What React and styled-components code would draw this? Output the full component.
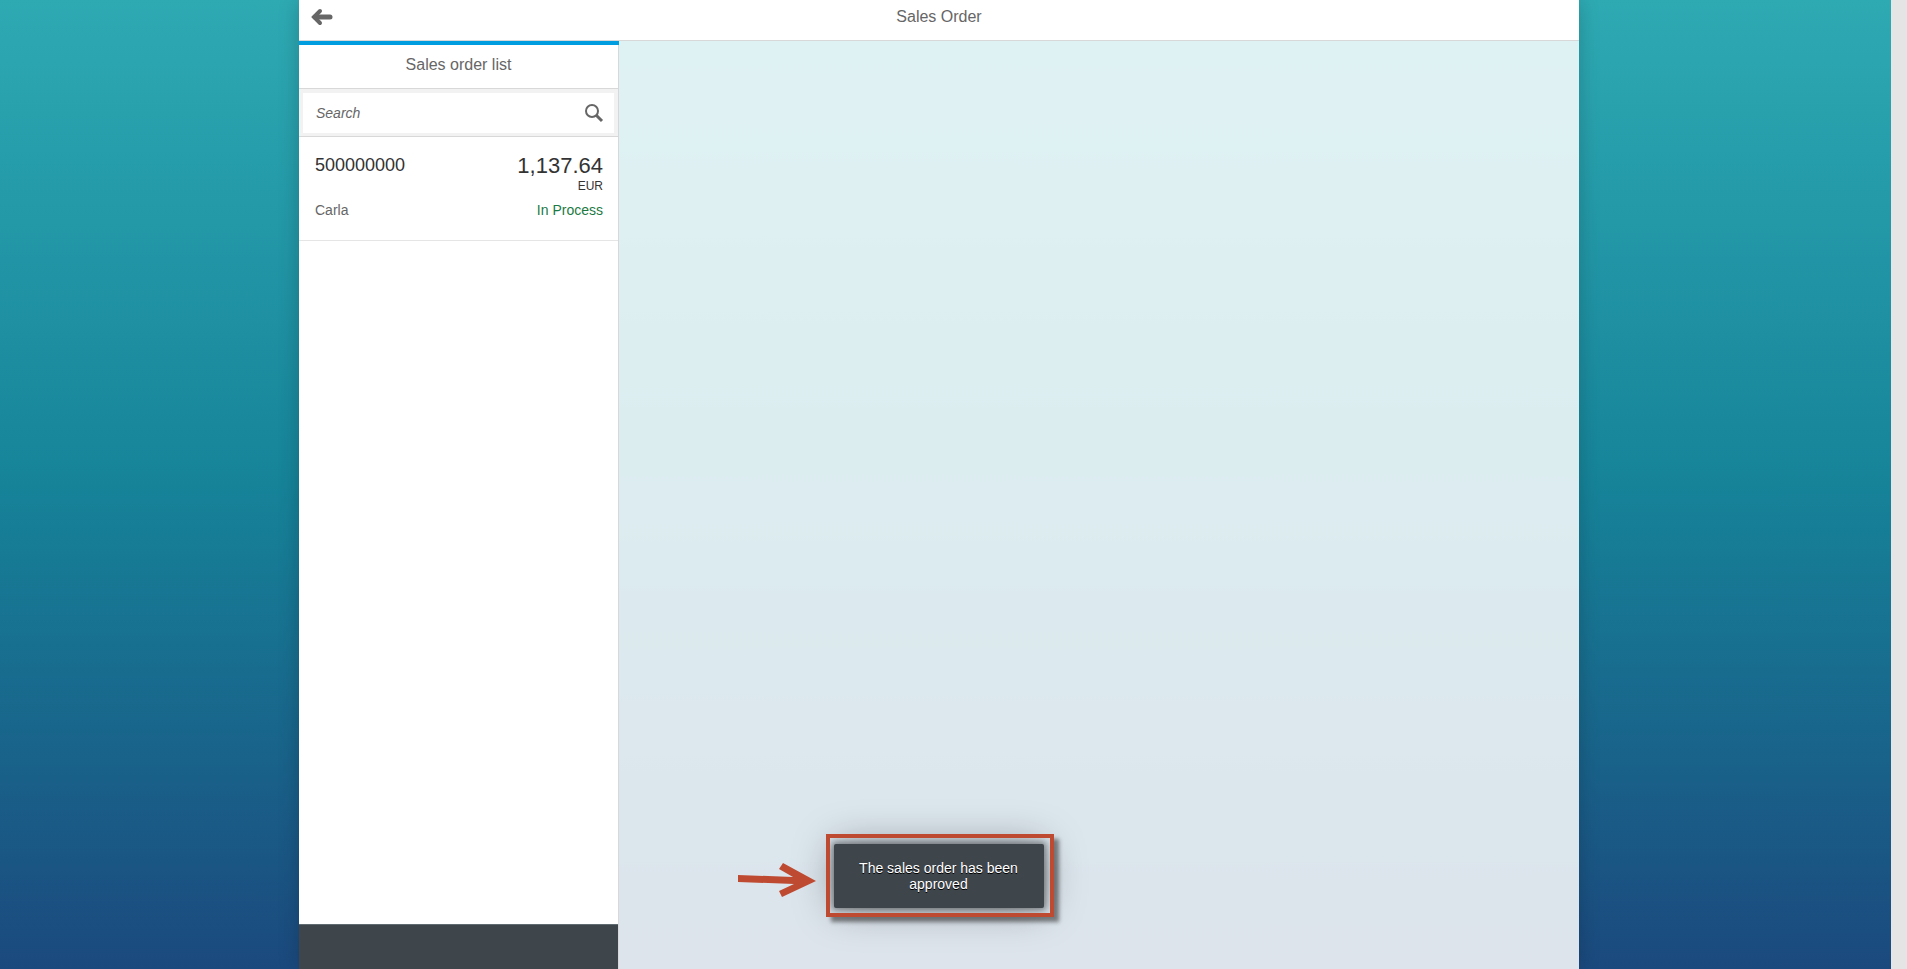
import React from "react";
import styled, { createGlobalStyle } from "styled-components";

const Global = createGlobalStyle`
  * { box-sizing: border-box; }
  body { margin: 0; font-family: "Liberation Sans", Arial, sans-serif; color: #333; }
`;
const Page = styled.div`
  display: flex;
  height: 100vh;
  overflow: hidden;
  background: #e5e5e5;
  padding-right: 16px;
`;
const Backdrop = styled.div`
  position: relative;
  flex: 1;
  display: flex;
  justify-content: center;
  padding-right: 13px;
  overflow: hidden;
  background: linear-gradient(to bottom, #2eaab3 0%, #168399 50%, #1b497e 100%);
`;
const Shell = styled.main`
  flex: 0 1 1280px;
  display: flex;
  flex-direction: column;
  background: rgba(255, 255, 255, 0.85);
  box-shadow: 0 0 20px rgba(0, 0, 0, 0.2);
`;
const Header = styled.header`
  display: grid;
  grid-template-columns: 48px 1fr 48px;
  align-items: center;
  height: 41px;
  padding-bottom: 7px;
  background: #fff;
  border-bottom: 1px solid #d8d8d8;
`;
const BackButton = styled.button`
  display: flex;
  width: 48px;
  height: 32px;
  padding: 0 0 0 12px;
  align-items: center;
  border: 0;
  background: none;
`;
const Title = styled.h1`
  margin: 0;
  color: #666;
  font-size: 16px;
  font-weight: 400;
  line-height: 24px;
  text-align: center;
`;
const Body = styled.div`
  flex: 1;
  display: flex;
  min-height: 0;
`;
const Master = styled.section`
  flex: 0 0 320px;
  display: flex;
  flex-direction: column;
  background: linear-gradient(#fff, #fff) padding-box;
  border-top: 4px solid #009de0;
`;
const MasterInner = styled.div`
  flex: 1;
  display: flex;
  flex-direction: column;
  border-right: 1px solid #d8d8d8;
`;
const ListTitle = styled.h2`
  margin: 0;
  padding: 8px 0 11px;
  border-bottom: 1px solid #d8d8d8;
  color: #666;
  font-size: 16px;
  font-weight: 400;
  line-height: 24px;
  text-align: center;
`;
const SearchBar = styled.form`
  padding: 4px 4px 3px;
  background: #f2f2f2;
  border-bottom: 1px solid #d8d8d8;
`;
const SearchField = styled.label`
  display: flex;
  align-items: center;
  height: 40px;
  padding: 0 10px 0 13px;
  background: #fff;
`;
const SearchInput = styled.input`
  flex: 1;
  min-width: 0;
  padding: 0;
  border: 0;
  outline: 0;
  background: none;
  font: 14px "Liberation Sans", Arial, sans-serif;
  &::placeholder { color: #666; font-style: italic; opacity: 1; }
`;
const SearchButton = styled.button`
  display: flex;
  padding: 0;
  border: 0;
  background: none;
`;
const OrderList = styled.ul`
  flex: 1;
  margin: 0;
  padding: 0;
  list-style: none;
`;
const OrderItem = styled.li`
  display: flex;
  flex-direction: column;
  gap: 7px;
  padding: 17px 15px 21px 16px;
  border-bottom: 1px solid #e5e5e5;
`;
const OrderRow = styled.div`
  display: flex;
  justify-content: space-between;
`;
const OrderNumber = styled.span`
  font-size: 18px;
  line-height: 22px;
`;
const Amount = styled.div`
  display: flex;
  flex-direction: column;
  text-align: right;
`;
const AmountValue = styled.span`
  font-size: 22px;
  line-height: 24px;
`;
const Currency = styled.span`
  font-size: 12px;
  line-height: 16px;
`;
const Attribute = styled.span`
  color: ${(p) => (p.$positive ? "#1b7a43" : "#666")};
  font-size: 14px;
  line-height: 18px;
`;
const Toolbar = styled.footer`
  height: 45px;
  background: #3e454b;
  border-top: 1px solid #5f6b70;
`;
const Notice = styled.div`
  position: absolute;
  left: calc(50% - 120px);
  bottom: 52px;
  padding: 10px 10px 9px 8px;
  box-shadow: 5px 5px 4px rgba(0, 0, 0, 0.45);

  &::after {
    content: "";
    position: absolute;
    inset: 0;
    border: 4px solid #bf4a32;
    pointer-events: none;
  }
`;
const Toast = styled.div`
  width: 210px;
  padding: 16px;
  border-radius: 2px;
  background: #3e454b;
  box-shadow: 0 0 40px rgba(0, 0, 0, 0.35), 0 0 6px 2px rgba(0, 0, 0, 0.4);
  color: #fff;
  font-size: 14px;
  line-height: 16px;
  text-align: center;
  text-shadow: 0 1px 0 #000;
`;
const Pointer = styled.svg`
  position: absolute;
  right: calc(100% + 10px);
  top: 29px;
`;

export default function App() {
  return (
    <Page>
      <Global />
      <Backdrop>
        <Shell>
          <Header>
            <BackButton type="button" aria-label="Back">
              <svg width="24" height="18" viewBox="0 0 24 18" fill="none" stroke="#666" strokeLinecap="round">
                <path d="M4 9H19" strokeWidth="5" />
                <path d="M9 3L3 9L9 15" strokeWidth="4" />
              </svg>
            </BackButton>
            <Title>Sales Order</Title>
          </Header>
          <Body>
            <Master>
              <MasterInner>
                <ListTitle>Sales order list</ListTitle>
                <SearchBar>
                  <SearchField>
                    <SearchInput type="text" placeholder="Search" aria-label="Search" />
                    <SearchButton type="button" aria-label="Start search">
                      <svg width="20" height="20" viewBox="0 0 20 20" fill="none" stroke="#666">
                        <circle cx="8" cy="8" r="6" strokeWidth="2" />
                        <path d="M12 12L18 18" strokeWidth="3" />
                      </svg>
                    </SearchButton>
                  </SearchField>
                </SearchBar>
                <OrderList>
                  <OrderItem>
                    <OrderRow>
                      <OrderNumber>500000000</OrderNumber>
                      <Amount>
                        <AmountValue>1,137.64</AmountValue>
                        <Currency>EUR</Currency>
                      </Amount>
                    </OrderRow>
                    <OrderRow>
                      <Attribute>Carla</Attribute>
                      <Attribute $positive>In Process</Attribute>
                    </OrderRow>
                  </OrderItem>
                </OrderList>
                <Toolbar />
              </MasterInner>
            </Master>
          </Body>
        </Shell>
        <Notice>
          <Pointer width="78" height="36" viewBox="0 0 78 36">
            <path d="M0 12L55 14L41 6L45 0L78 18L44 34L41 28L56 21L0 19Z" fill="#bf4a32" />
          </Pointer>
          <Toast role="status">The sales order has been approved</Toast>
        </Notice>
      </Backdrop>
    </Page>
  );
}
